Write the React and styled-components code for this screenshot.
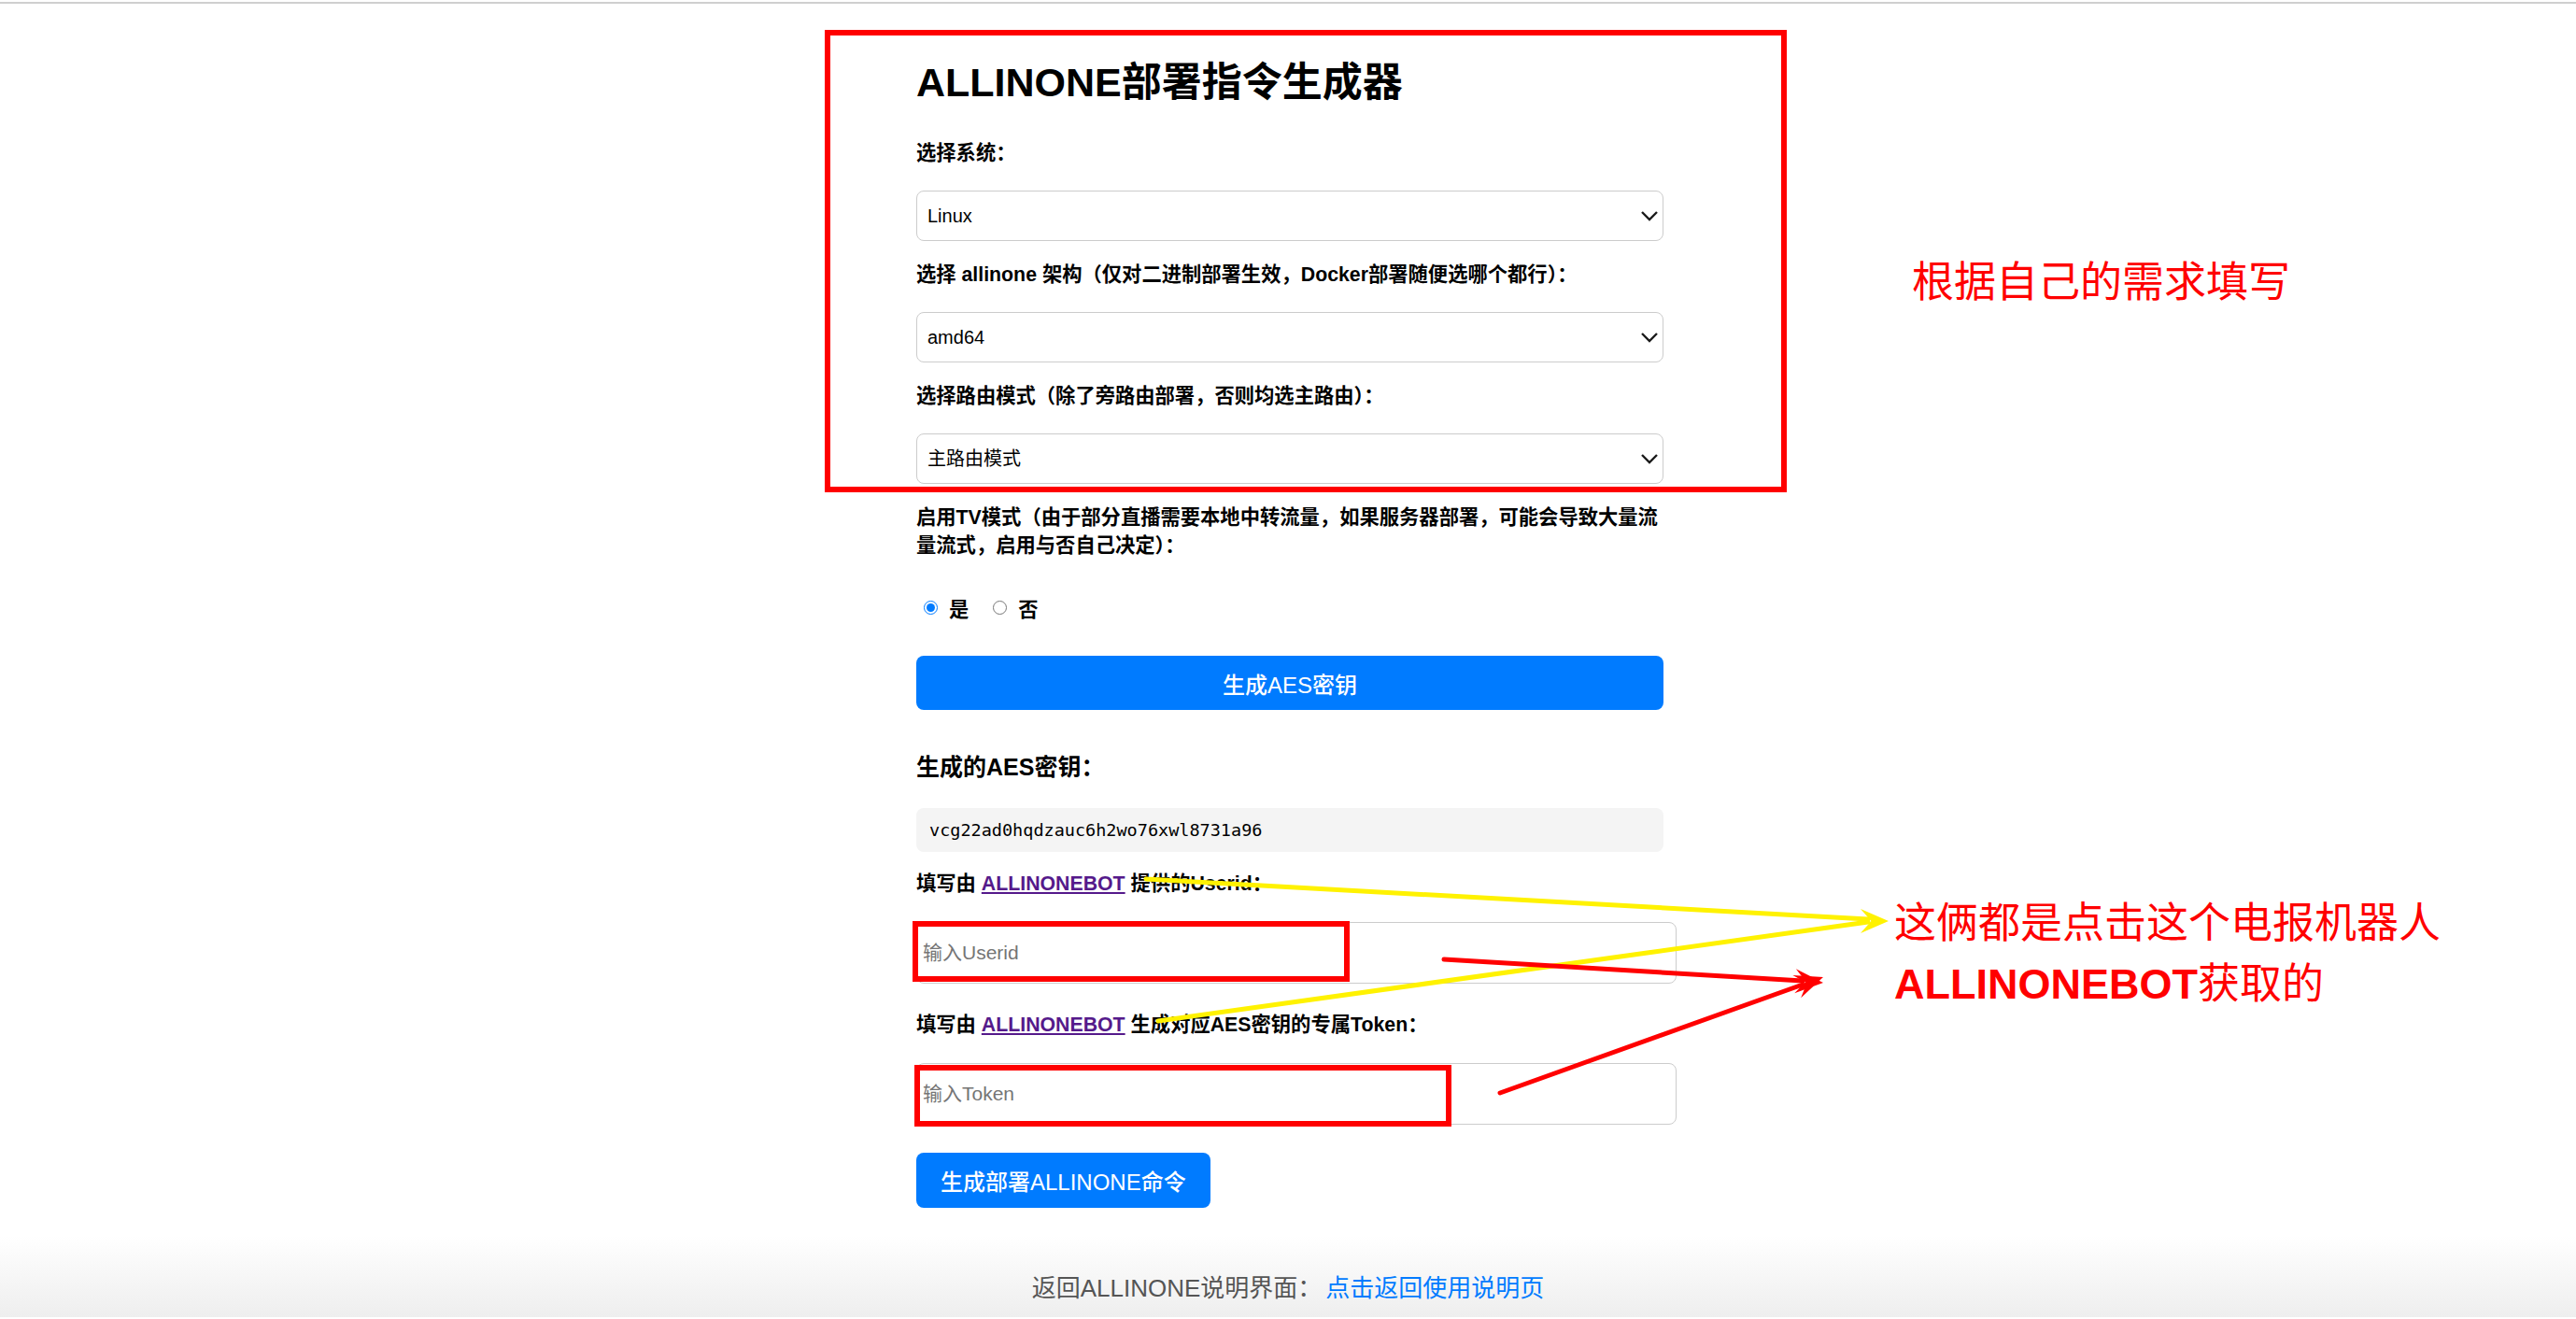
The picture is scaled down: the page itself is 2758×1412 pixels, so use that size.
import styled, { createGlobalStyle } from 'styled-components';

const GlobalStyle = createGlobalStyle`
  html {
    overflow: hidden;
  }
  body {
    margin: 0;
    background: #fff;
    color: #000;
    font-family: "Liberation Sans", "Noto Sans CJK SC", sans-serif;
  }
`;

function arrowHead(x1, y1, x2, y2, len = 30, w = 13) {
  const a = Math.atan2(y2 - y1, x2 - x1);
  const dx = Math.cos(a);
  const dy = Math.sin(a);
  const bx = x2 - len * dx;
  const by = y2 - len * dy;
  const nx = -dy;
  const ny = dx;
  const mx = x2 - len * 0.62 * dx;
  const my = y2 - len * 0.62 * dy;
  return [
    [x2, y2],
    [bx + nx * w, by + ny * w],
    [mx, my],
    [bx - nx * w, by - ny * w],
  ]
    .map((p) => p.join(','))
    .join(' ');
}

function Chevron() {
  return (
    <ChevronIcon width="20" height="12" viewBox="0 0 20 12">
      <polyline points="2,2 10,10 18,2" fill="none" stroke="#1a1a1a" strokeWidth="2.4" />
    </ChevronIcon>
  );
}

function SelectField({ label, value, options }) {
  return (
    <Field>
      <Label>{label}</Label>
      <SelectWrap>
        <Select defaultValue={value}>
          {options.map((o) => (
            <option key={o}>{o}</option>
          ))}
        </Select>
        <Chevron />
      </SelectWrap>
    </Field>
  );
}

function App() {
  return (
    <Page>
      <GlobalStyle />
      <TopRule />
      <Container>
        <Title>ALLINONE部署指令生成器</Title>
        <SelectField label="选择系统：" value="Linux" options={['Linux', 'Windows', 'macOS']} />
        <SelectField
          label="选择 allinone 架构（仅对二进制部署生效，Docker部署随便选哪个都行）："
          value="amd64"
          options={['amd64', 'arm64']}
        />
        <SelectField
          label="选择路由模式（除了旁路由部署，否则均选主路由）："
          value="主路由模式"
          options={['主路由模式', '旁路由模式']}
        />
        <Label>启用TV模式（由于部分直播需要本地中转流量，如果服务器部署，可能会导致大量流量流式，启用与否自己决定）：</Label>
        <RadioRow>
          <RadioOption>
            <Radio type="radio" name="tv" defaultChecked />
            是
          </RadioOption>
          <RadioOption>
            <Radio type="radio" name="tv" />
            否
          </RadioOption>
        </RadioRow>
        <WideButton>生成AES密钥</WideButton>
        <SubTitle>生成的AES密钥：</SubTitle>
        <KeyBox>vcg22ad0hqdzauc6h2wo76xwl8731a96</KeyBox>
        <Label $top={3} $gap={26}>
          填写由 <BotLink href="#">ALLINONEBOT</BotLink> 提供的Userid：
        </Label>
        <TextInput placeholder="输入Userid" />
        <Label $gap={26} $top={29}>
          填写由 <BotLink href="#">ALLINONEBOT</BotLink> 生成对应AES密钥的专属Token：
        </Label>
        <TextInput placeholder="输入Token" />
        <SmallButton>生成部署ALLINONE命令</SmallButton>
      </Container>
      <Footer>
        返回ALLINONE说明界面：<FooterLink href="#">点击返回使用说明页</FooterLink>
      </Footer>

      <Overlay width="2758" height="1412" viewBox="0 0 2758 1412">
        <rect x="886" y="35" width="1024" height="489" fill="none" stroke="#ff0000" strokeWidth="6" />
        <rect x="980" y="989" width="462" height="59" fill="none" stroke="#ff0000" strokeWidth="6" />
        <rect x="982" y="1143" width="569" height="60" fill="none" stroke="#ff0000" strokeWidth="6" />

        <line x1="1227" y1="941" x2="2000" y2="984" stroke="#fff200" strokeWidth="5" strokeLinecap="round" />
        <line x1="1240" y1="1093" x2="2000" y2="987" stroke="#fff200" strokeWidth="5" strokeLinecap="round" />
        <polygon points={arrowHead(1300, 986, 2022, 986)} fill="#fff200" />

        <line x1="1546" y1="1027" x2="1930" y2="1050" stroke="#ff0000" strokeWidth="5" strokeLinecap="round" />
        <polygon points={arrowHead(1546, 1027, 1952, 1052)} fill="#ff0000" />
        <line x1="1606" y1="1170" x2="1930" y2="1054" stroke="#ff0000" strokeWidth="5" strokeLinecap="round" />
        <polygon points={arrowHead(1606, 1170, 1952, 1046)} fill="#ff0000" />
      </Overlay>

      <Note $left={2047} $top={266}>根据自己的需求填写</Note>
      <Note $left={2028} $top={952}>
        这俩都是点击这个电报机器人
        <br />
        <NoteBold>ALLINONEBOT</NoteBold>获取的
      </Note>
    </Page>
  );
}

const Page = styled.div`
  position: relative;
  min-height: 1412px;
  display: flex;
  flex-direction: column;
  padding-left: 4px;
`;

const TopRule = styled.div`
  margin: 2px 0 0 -4px;
  height: 2px;
  background: #cfcfcf;
`;

const Container = styled.div`
  width: 800px;
  margin: 0 auto;
  padding-top: 56px;
`;

const Title = styled.h1`
  margin: 0 0 33px;
  font-size: 43px;
  line-height: 56px;
  font-weight: 700;
`;

const Field = styled.div`
  margin-bottom: 21px;
`;

const Label = styled.label`
  display: block;
  margin: ${(p) => p.$top || 0}px 0 ${(p) => p.$gap || 25}px;
  font-size: 21.3px;
  line-height: 30px;
  font-weight: 700;
`;

const SelectWrap = styled.div`
  position: relative;
`;

const Select = styled.select`
  appearance: none;
  width: 100%;
  height: 54px;
  padding: 0 11px;
  border: 1px solid #cccccc;
  border-radius: 8px;
  background: #fff;
  color: #000;
  font-family: inherit;
  font-size: 20px;
`;

const ChevronIcon = styled.svg`
  position: absolute;
  right: 5px;
  top: 50%;
  transform: translateY(-50%);
  pointer-events: none;
`;

const RadioRow = styled.div`
  display: flex;
  align-items: center;
  height: 30px;
  margin: 36px 0 37px;
  padding-left: 8px;
`;

const RadioOption = styled.label`
  display: flex;
  align-items: center;
  gap: 12px;
  margin-right: 26px;
  font-size: 21.3px;
  font-weight: 700;
`;

const Radio = styled.input`
  width: 15px;
  height: 15px;
  margin: 0;
  accent-color: #007bff;
`;

const BlueButton = styled.button`
  height: 58px;
  border: none;
  border-radius: 8px;
  background: #007bff;
  color: #fff;
  font-family: inherit;
  font-size: 24px;
  font-weight: 500;
`;

const WideButton = styled(BlueButton)`
  display: block;
  width: 100%;
`;

const SmallButton = styled(BlueButton)`
  display: block;
  height: 59px;
  margin-top: 30px;
  padding: 0 26px;
`;

const SubTitle = styled.h3`
  margin: 44px 0 27px;
  font-size: 25px;
  line-height: 34px;
  font-weight: 700;
`;

const KeyBox = styled.div`
  display: flex;
  align-items: center;
  height: 47px;
  margin-bottom: 19px;
  padding: 0 14px;
  border-radius: 8px;
  background: #f4f4f4;
  font-family: "DejaVu Sans Mono", "Liberation Mono", monospace;
  font-size: 18.5px;
`;

const BotLink = styled.a`
  color: #551a8b;
  text-decoration: underline;
`;

const TextInput = styled.input`
  display: block;
  width: 100%;
  height: 64px;
  padding: 0 6px;
  border: 1px solid #cccccc;
  border-radius: 8px;
  font-family: inherit;
  font-size: 21px;
  color: #000;

  &::placeholder {
    color: #757575;
  }
`;

const Footer = styled.footer`
  margin: 30px 0 0 -4px;
  padding: 40px 0 15px;
  line-height: 32px;
  text-align: center;
  font-size: 26px;
  color: #555;
  background: linear-gradient(to bottom, #ffffff, #eeeeee);
`;

const FooterLink = styled.a`
  margin-left: 4px;
  color: #007bff;
  text-decoration: none;
`;

const Overlay = styled.svg`
  position: absolute;
  left: 0;
  top: 0;
  pointer-events: none;
`;

const Note = styled.div`
  position: absolute;
  left: ${(p) => p.$left}px;
  top: ${(p) => p.$top}px;
  color: #ff0000;
  font-family: "Noto Sans CJK SC", sans-serif;
  font-size: 45px;
  line-height: 65px;
  font-weight: 400;
  white-space: nowrap;
`;

const NoteBold = styled.span`
  font-family: "Liberation Sans", sans-serif;
  font-weight: 700;
`;

export default App;
